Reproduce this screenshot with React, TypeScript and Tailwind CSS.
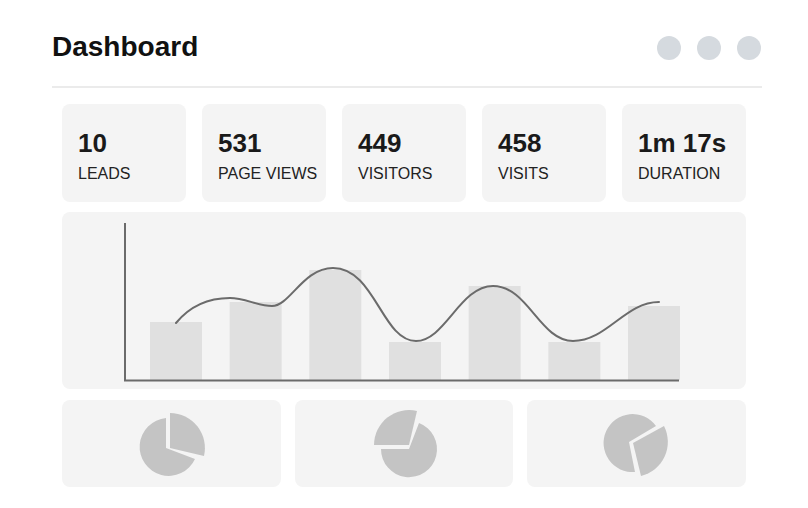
import React from "react";

const stats = [
  { value: "10", label: "LEADS" },
  { value: "531", label: "PAGE VIEWS" },
  { value: "449", label: "VISITORS" },
  { value: "458", label: "VISITS" },
  { value: "1m 17s", label: "DURATION" },
];

const barTops = [110, 90, 58, 130, 74, 130, 94];

const pies = [
  {
    main: "M104,48 L104,18 A29 29 0 1 0 133,59 Z",
    wedge: "M108,48 L108,13 A35 35 0 0 1 142,56 Z",
  },
  {
    main: "M114,49 L86,49 A28 28 0 1 0 124,23 Z",
    wedge: "M114,45 L79,45 A35 35 0 0 1 122,11 Z",
  },
  {
    main: "M102,42 L129,26 A29 29 0 1 0 108,72 Z",
    wedge: "M106,43 L137,26 A35 35 0 0 1 114,76 Z",
  },
];

export default function App() {
  return (
    <div
      className="w-[808px] h-[508px] bg-white overflow-hidden"
      style={{ fontFamily: '"Liberation Sans", Arial, sans-serif' }}
    >
      <div className="ml-[52px] w-[710px] pt-[36px]">
        <div className="flex items-center justify-between h-[24px]">
          <h1 className="text-[28px] font-bold leading-none text-[#111] mb-[2px]">Dashboard</h1>
          <div className="flex gap-4 mr-[1px]">
            <span className="size-6 rounded-full bg-[#d5dadf]" />
            <span className="size-6 rounded-full bg-[#d5dadf]" />
            <span className="size-6 rounded-full bg-[#d5dadf]" />
          </div>
        </div>
        <div className="mt-[26px] h-[2px] bg-[#ebebeb]" />
        <div className="ml-[10px] mr-[16px] mt-[16px]">
          <div className="grid grid-cols-5 gap-4">
            {stats.map((s) => (
              <div key={s.label} className="h-[98px] rounded-lg bg-[#f4f4f4] pl-4 pt-[26px]">
                <div className="text-[26px] font-bold leading-none text-[#1a1a1a]">{s.value}</div>
                <div className="mt-[10px] text-[16px] leading-none text-[#222]">{s.label}</div>
              </div>
            ))}
          </div>
          <div className="mt-[10px] h-[177px] rounded-lg bg-[#f4f4f4]">
            <svg width="684" height="177" viewBox="0 0 684 177" className="block">
              {barTops.map((t, i) => (
                <rect key={i} x={88 + 79.67 * i} y={t} width={52} height={168 - t} fill="#e0e0e0" />
              ))}
              <path
                d="M114,111 C128,94 146,86 168,86 C183,86 196,94 210,94 C228,94 241,56 271,56 C313,56 320,129 354,129 C383,129 398,74 431,74 C466,74 478,129 511,129 C545,129 563,90 597,90"
                fill="none"
                stroke="#6b6b6b"
                strokeWidth={2}
                strokeLinecap="round"
              />
              <path d="M63,11 L63,168.5 L617,168.5" fill="none" stroke="#6b6b6b" strokeWidth={2} />
            </svg>
          </div>
          <div className="mt-[11px] grid grid-cols-3 gap-[14px]">
            {pies.map((p, i) => (
              <div key={i} className="h-[87px] rounded-lg bg-[#f4f4f4] overflow-hidden">
                <svg width="218" height="87" viewBox="0 0 218 87" className="block">
                  <path d={p.main} fill="#c4c4c4" />
                  <path d={p.wedge} fill="#c4c4c4" />
                </svg>
              </div>
            ))}
          </div>
        </div>
      </div>
    </div>
  );
}
